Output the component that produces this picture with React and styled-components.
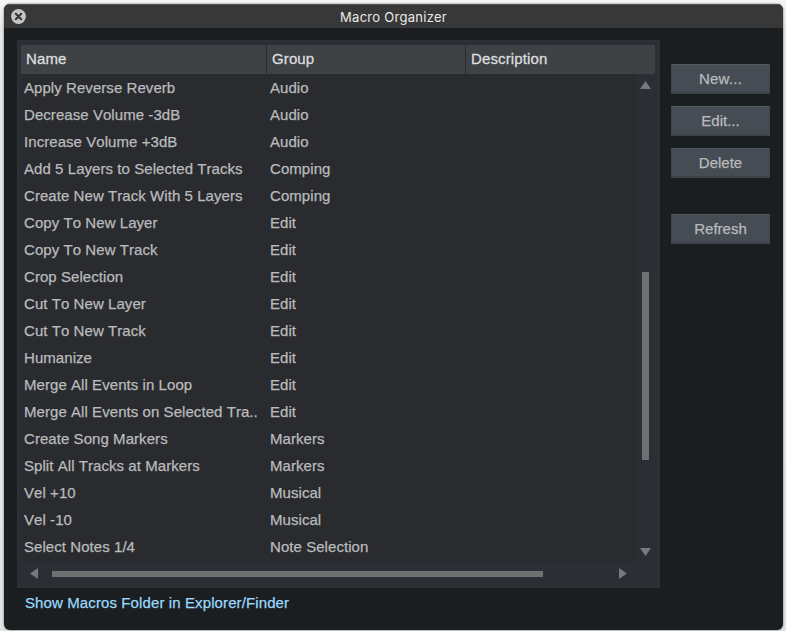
import React from "react";
import styled, { createGlobalStyle } from "styled-components";

const GlobalStyle = createGlobalStyle`
  * { box-sizing: border-box; }
  html, body { margin: 0; height: 100%; overflow: hidden; }
  body {
    background: #ececec;
    font-family: "Liberation Sans", Arial, sans-serif;
    font-size: 15px;
    -webkit-font-smoothing: antialiased;
  }
`;

const Desktop = styled.div`
  width: 786px;
  height: 631px;
  padding: 4px 3px 1px 4px;
  background: linear-gradient(#f6f6f6, #e6e6e6 30px, #e2e2e2);
`;

const Window = styled.main`
  display: flex;
  flex-direction: column;
  height: 626px;
  overflow: hidden;
  border-radius: 6px;
  background: #1b1e20;
  box-shadow: 0 0 2px rgba(0, 0, 0, 0.65);
`;

const TitleBar = styled.header`
  display: grid;
  grid-template-columns: 28px 1fr 28px;
  align-items: center;
  height: 24px;
  flex: none;
  background: #383838;
  border-top: 1px solid #545454;
`;

const CloseButton = styled.button`
  display: flex;
  padding: 0;
  margin: 0 0 1px 7px;
  border: 0;
  background: none;
`;

const Title = styled.h1`
  margin: 0;
  text-align: center;
  color: #e9e9e9;
  font: 13px/20px Inter, sans-serif;
  letter-spacing: 0.27px;
`;

const Content = styled.div`
  display: flex;
  align-items: flex-start;
  padding: 12px 13px 0 13px;
`;

const Panel = styled.section`
  display: grid;
  grid-template: 29px 488px 1fr / 615px 1fr;
  width: 643px;
  height: 548px;
  padding: 5px 4px 0 4px;
  background: #2b2e35;
  box-shadow: inset 0 0 0 1px #2e3135;
`;

const HeaderRow = styled.div`
  grid-column: 1 / -1;
  display: grid;
  grid-template-columns: 246px 199px 1fr;
  width: 634px;
  background: #3f4245;
`;

const HeaderCell = styled.div`
  padding-left: 5px;
  line-height: 28px;
  color: #dcdedf;
  -webkit-text-stroke: 0.3px #dcdedf;
  letter-spacing: 0.12px;
  border-right: ${(p) => (p.$last ? "0" : "1px solid #2a2c2f")};
`;

const List = styled.div`
  background: #2a2b2e;
`;

const Row = styled.div`
  display: grid;
  grid-template-columns: 246px 1fr;
  height: 27px;
  line-height: 27px;
  padding-left: 3px;
  color: #b9bbbd;
  -webkit-text-stroke: 0.25px #b9bbbd;
  font-kerning: none;
  letter-spacing: 0.06px;
  white-space: pre;
`;

const VerticalBar = styled.div`
  display: flex;
  flex-direction: column;
  align-items: center;
  padding: 7px 2px 0 0;
`;

const VerticalThumb = styled.div`
  width: 7px;
  height: 188px;
  margin: 183px 0 88px;
  background: #6f7072;
`;

const HorizontalBar = styled.div`
  display: flex;
  align-items: flex-start;
  padding: 6px 8px 0 9px;
`;

const HorizontalThumb = styled.div`
  width: 491px;
  height: 6px;
  margin: 3px 76px 0 14px;
  flex: none;
  background: #6f7072;
`;

const ArrowIcon = styled.svg`
  display: block;
  flex: none;
  fill: #77797a;
`;

const Actions = styled.nav`
  display: flex;
  flex-direction: column;
  margin: 24px 0 0 11px;
`;

const ActionButton = styled.button`
  width: 99px;
  height: 30px;
  margin: ${(p) => (p.$separated ? "24px" : "0")} 0 12px;
  padding: 0;
  border: 1px solid #41474d;
  border-top-color: #535a60;
  border-bottom: 2px solid #3d4247;
  border-radius: 0;
  background: #464c53;
  color: #b8bbbd;
  -webkit-text-stroke: 0.25px #b8bbbd;
  font: 15px/27px "Liberation Sans", Arial, sans-serif;
  letter-spacing: ${(p) => (p.$ellipsis ? "0.25px" : "0")};
`;

const FolderLink = styled.a`
  align-self: flex-start;
  margin: 5px 0 0 21px;
  line-height: 20px;
  color: #99d9fb;
  -webkit-text-stroke: 0.25px #99d9fb;
  letter-spacing: 0.11px;
`;

const rows = [
  ["Apply Reverse Reverb", "Audio"],
  ["Decrease Volume -3dB", "Audio"],
  ["Increase Volume +3dB", "Audio"],
  ["Add 5 Layers to Selected Tracks", "Comping"],
  ["Create New Track With 5 Layers", "Comping"],
  ["Copy To New Layer", "Edit"],
  ["Copy To New Track", "Edit"],
  ["Crop Selection", "Edit"],
  ["Cut To New Layer", "Edit"],
  ["Cut To New Track", "Edit"],
  ["Humanize", "Edit"],
  ["Merge All Events in Loop", "Edit"],
  ["Merge All Events on Selected Tra..", "Edit"],
  ["Create Song Markers", "Markers"],
  ["Split All Tracks at Markers", "Markers"],
  ["Vel +10", "Musical"],
  ["Vel -10", "Musical"],
  ["Select Notes 1/4", "Note Selection"],
];

const arrows = {
  up: [11, 8, "0,8 5.5,0 11,8"],
  down: [11, 8, "0,0 11,0 5.5,8"],
  left: [8, 11, "8,0 8,11 0,5.5"],
  right: [8, 11, "0,0 8,5.5 0,11"],
};

function Arrow({ direction }) {
  const [width, height, points] = arrows[direction];
  return (
    <ArrowIcon width={width} height={height} aria-hidden="true">
      <polygon points={points} />
    </ArrowIcon>
  );
}

export default function App() {
  return (
    <Desktop>
      <GlobalStyle />
      <Window>
        <TitleBar>
          <CloseButton aria-label="Close">
            <svg width="15" height="15" viewBox="0 0 15 15">
              <circle cx="7.5" cy="7.5" r="7.4" fill="#c4c4c4" />
              <path d="M4.8 4.8l5.4 5.4M10.2 4.8l-5.4 5.4" stroke="#363636" strokeWidth="2.1" strokeLinecap="round" />
            </svg>
          </CloseButton>
          <Title>Macro Organizer</Title>
        </TitleBar>
        <Content>
          <Panel>
            <HeaderRow>
              <HeaderCell>Name</HeaderCell>
              <HeaderCell>Group</HeaderCell>
              <HeaderCell $last>Description</HeaderCell>
            </HeaderRow>
            <List>
              {rows.map(([name, group]) => (
                <Row key={name}>
                  <span>{name}</span>
                  <span>{group}</span>
                </Row>
              ))}
            </List>
            <VerticalBar>
              <Arrow direction="up" />
              <VerticalThumb />
              <Arrow direction="down" />
            </VerticalBar>
            <HorizontalBar>
              <Arrow direction="left" />
              <HorizontalThumb />
              <Arrow direction="right" />
            </HorizontalBar>
          </Panel>
          <Actions>
            <ActionButton $ellipsis>New...</ActionButton>
            <ActionButton>Edit...</ActionButton>
            <ActionButton>Delete</ActionButton>
            <ActionButton $separated>Refresh</ActionButton>
          </Actions>
        </Content>
        <FolderLink>Show Macros Folder in Explorer/Finder</FolderLink>
      </Window>
    </Desktop>
  );
}
